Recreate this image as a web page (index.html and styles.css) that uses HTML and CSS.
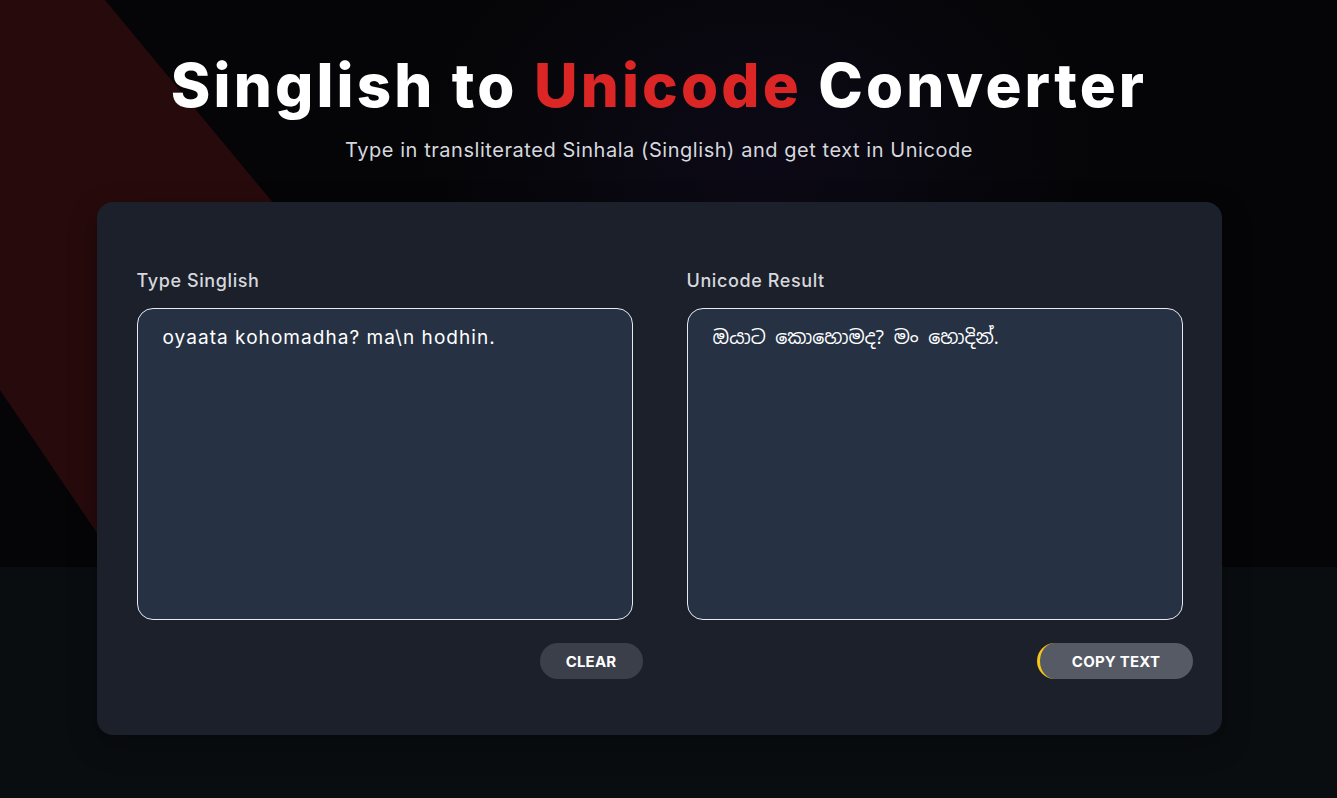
FILE: index.html
```html
<!DOCTYPE html>
<html lang="en">
<head>
<meta charset="utf-8">
<title>Singlish to Unicode Converter</title>
<link rel="stylesheet" href="styles.css">
</head>
<body>
<div class="page">
  <div class="backdrop">
    <div class="band"></div>
    <div class="glow"></div>
  </div>
  <main class="content">
    <h1 class="title">Singlish to <span class="accent">Unicode</span> Converter</h1>
    <p class="subtitle">Type in transliterated Sinhala (Singlish) and get text in Unicode</p>
    <section class="card">
      <div class="column">
        <label class="label" for="src">Type Singlish</label>
        <textarea id="src" class="box">oyaata kohomadha? ma\n hodhin.</textarea>
        <div class="actions">
          <button class="btn btn-clear">CLEAR</button>
        </div>
      </div>
      <div class="column">
        <label class="label" for="out">Unicode Result</label>
        <textarea id="out" class="box sinhala" readonly>ඔයාට කොහොමද? මං හොදින්.</textarea>
        <div class="actions">
          <button class="btn btn-copy">COPY TEXT</button>
        </div>
      </div>
    </section>
  </main>
</div>
</body>
</html>
```

FILE: styles.css
```css
* { box-sizing: border-box; }
html, body { margin: 0; padding: 0; }
body {
  background: #0a0d10;
  font-family: Inter, "Noto Sans", "Liberation Sans", sans-serif;
  color: #fff;
  min-height: 798px;
  overflow: hidden;
}
.page { position: relative; min-height: 798px; }
.backdrop {
  position: absolute;
  left: 0; top: 0; right: 0;
  height: 567px;
  background: #050507;
  overflow: hidden;
}
.band {
  position: absolute;
  inset: 0;
  background: #270a0c;
  clip-path: polygon(0 0, 105px 0, 575px 567px, 120px 567px, 0 390px);
}
.glow {
  position: absolute;
  left: 420px; top: -100px;
  width: 680px; height: 520px;
  background: radial-gradient(closest-side, rgba(20,14,38,0.5), rgba(10,8,20,0));
}
.content {
  position: relative;
  display: flex;
  flex-direction: column;
  align-items: center;
  padding: 49px 19px 0 0;
}
.title {
  margin: 0;
  font-size: 60px;
  line-height: 72px;
  font-weight: 800;
  letter-spacing: 3.15px;
  color: #fff;
}
.accent { color: #dc2626; }
.subtitle {
  margin: 15px 0 0;
  font-size: 20px;
  line-height: 28px;
  color: #d6d8de;
  font-weight: 400;
  letter-spacing: 0.55px;
}
.card {
  margin-top: 38px;
  width: 1125px;
  height: 533px;
  background: #1c202a;
  border-radius: 16px;
  padding: 66px 29px 0 40px;
  display: grid;
  grid-template-columns: 1fr 1fr;
  column-gap: 44px;
  box-shadow: 0 10px 30px rgba(0,0,0,0.3);
}
.column { display: flex; flex-direction: column; }
.label {
  font-size: 18px;
  line-height: 26px;
  font-weight: 500;
  color: #d6d8de;
  letter-spacing: 0.6px;
  margin-bottom: 14px;
}
.box {
  width: calc(100% - 10px);
  height: 312px;
  resize: none;
  background: #263244;
  border: 1px solid #e8eaef;
  border-radius: 16px;
  color: #fff;
  font-family: Inter, "Noto Sans", "Liberation Sans", sans-serif;
  font-size: 19px;
  line-height: 28px;
  letter-spacing: 1.05px;
  padding: 15px 25px;
  outline: none;
}
.sinhala {
  font-family: "Noto Sans Sinhala", "Iskoola Pota", "Noto Sans", sans-serif;
  letter-spacing: 0;
}
.actions {
  display: flex;
  justify-content: flex-end;
  margin-top: 23px;
}
.btn {
  height: 36px;
  border: none;
  border-radius: 18px;
  color: #fff;
  font-family: Inter, "Noto Sans", "Liberation Sans", sans-serif;
  font-size: 15px;
  font-weight: 700;
  letter-spacing: 0.2px;
  cursor: pointer;
}
.btn-clear {
  width: 103px;
  background: #3a3f4a;
}
.btn-copy {
  width: 156px;
  background: #555a64;
  border-left: 3px solid #f5c518;
}
```
